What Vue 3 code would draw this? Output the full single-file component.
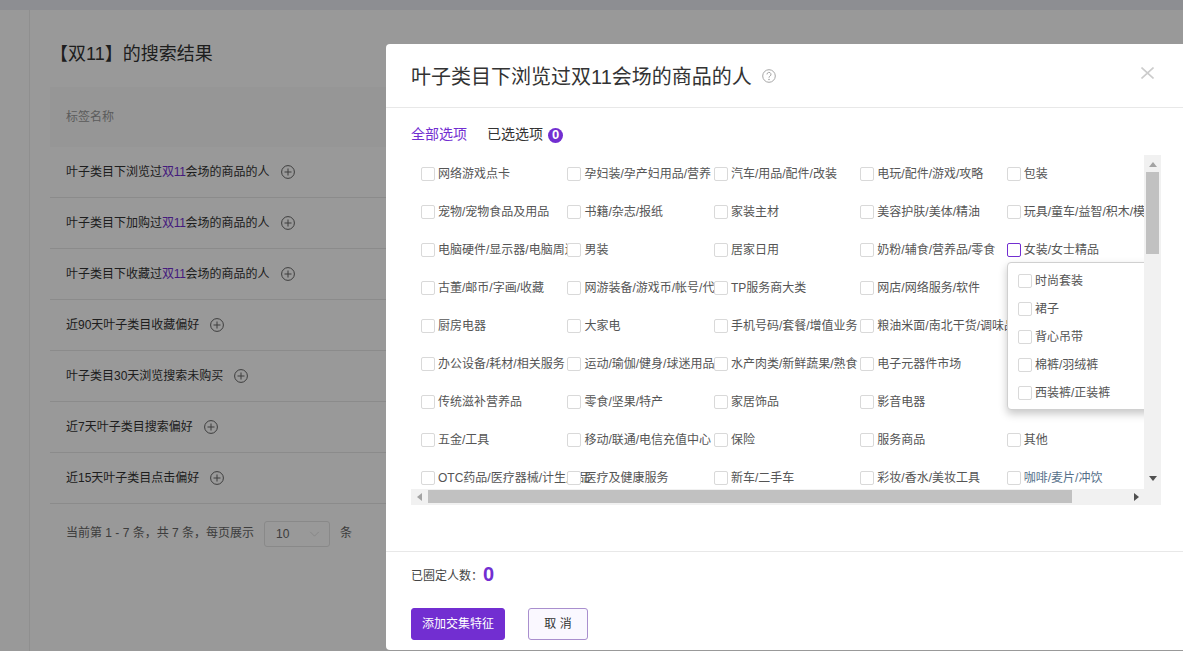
<script setup>
const rows = [
  { pre: '叶子类目下浏览过', hit: '双11', post: '会场的商品的人' },
  { pre: '叶子类目下加购过', hit: '双11', post: '会场的商品的人' },
  { pre: '叶子类目下收藏过', hit: '双11', post: '会场的商品的人' },
  { pre: '近90天叶子类目收藏偏好' },
  { pre: '叶子类目30天浏览搜索未购买' },
  { pre: '近7天叶子类目搜索偏好' },
  { pre: '近15天叶子类目点击偏好' },
]
const options = [
  '网络游戏点卡', '孕妇装/孕产妇用品/营养', '汽车/用品/配件/改装', '电玩/配件/游戏/攻略', '包装',
  '宠物/宠物食品及用品', '书籍/杂志/报纸', '家装主材', '美容护肤/美体/精油', '玩具/童车/益智/积木/模型',
  '电脑硬件/显示器/电脑周边', '男装', '居家日用', '奶粉/辅食/营养品/零食', '女装/女士精品',
  '古董/邮币/字画/收藏', '网游装备/游戏币/帐号/代练', 'TP服务商大类', '网店/网络服务/软件', '',
  '厨房电器', '大家电', '手机号码/套餐/增值业务', '粮油米面/南北干货/调味品', '',
  '办公设备/耗材/相关服务', '运动/瑜伽/健身/球迷用品', '水产肉类/新鲜蔬果/熟食', '电子元器件市场', '',
  '传统滋补营养品', '零食/坚果/特产', '家居饰品', '影音电器', '',
  '五金/工具', '移动/联通/电信充值中心', '保险', '服务商品', '其他',
  'OTC药品/医疗器械/计生用品', '医疗及健康服务', '新车/二手车', '彩妆/香水/美妆工具', '咖啡/麦片/冲饮',
]
const subOptions = ['时尚套装', '裙子', '背心吊带', '棉裤/羽绒裤', '西装裤/正装裤']
</script>

<template>
  <div class="page">
    <div class="topbar"></div>
    <div class="body">
      <aside class="side"></aside>
      <main class="main">
        <h1 class="heading">【双11】的搜索结果</h1>
        <div class="thead">标签名称</div>
        <div v-for="(r, i) in rows" :key="i" class="trow">
          <span>{{ r.pre }}<em v-if="r.hit" class="hit">{{ r.hit }}</em>{{ r.post }}</span>
          <svg class="plus" viewBox="0 0 14 14" width="14" height="14">
            <circle cx="7" cy="7" r="6.4" fill="none" stroke="currentColor" />
            <path d="M7 3.5v7M3.5 7h7" fill="none" stroke="currentColor" />
          </svg>
        </div>
        <div class="pager">
          <span>当前第 1 - 7 条，共 7 条，每页展示</span>
          <div class="select">
            <span>10</span>
            <svg viewBox="0 0 12 7" width="11" height="6"><path d="M1 1l5 5 5-5" fill="none" stroke="currentColor" /></svg>
          </div>
          <span>条</span>
        </div>
      </main>
    </div>

    <div class="mask">
      <section class="modal">
        <header class="m-head">
          <h2 class="m-title">叶子类目下浏览过双11会场的商品的人</h2>
          <svg class="help" viewBox="0 0 14 14" width="14" height="14">
            <circle cx="7" cy="7" r="6.3" fill="none" stroke="currentColor" />
            <path d="M5 5.4a2 2 0 1 1 3 1.7c-.7.4-1 .8-1 1.6" fill="none" stroke="currentColor" />
            <circle cx="7" cy="10.5" r=".8" fill="currentColor" />
          </svg>
          <svg class="close" viewBox="0 0 13 12" width="13" height="12">
            <path d="M.5.5l12 11M12.5.5l-12 11" fill="none" stroke="currentColor" stroke-width="1.6" />
          </svg>
        </header>

        <div class="m-body">
          <nav class="tabs">
            <span class="tab active">全部选项</span>
            <span class="tab">已选选项</span>
            <span class="badge">0</span>
          </nav>

          <div class="frame">
            <div class="viewport">
              <div class="grid">
                <label v-for="(o, i) in options" :key="i" class="cell">
                  <template v-if="o">
                    <i class="box" :class="{ on: o === '女装/女士精品' }"></i>
                    <span class="txt" :class="{ blue: o === '咖啡/麦片/冲饮' }">{{ o }}</span>
                  </template>
                </label>
              </div>
              <div class="pop">
                <label v-for="s in subOptions" :key="s" class="pop-row">
                  <i class="box"></i><span class="txt">{{ s }}</span>
                </label>
              </div>
            </div>
            <div class="vbar">
              <i class="arr up"></i>
              <div class="vtrack"><div class="vthumb"></div></div>
              <i class="arr down"></i>
            </div>
            <div class="hbar">
              <i class="arr left"></i>
              <div class="htrack"><div class="hthumb"></div></div>
              <i class="arr right"></i>
            </div>
            <div class="corner"></div>
          </div>
        </div>

        <footer class="m-foot">
          <div class="count"><span>已圈定人数：</span><strong>0</strong></div>
          <div class="btns">
            <button class="btn primary">添加交集特征</button>
            <button class="btn ghost">取 消</button>
          </div>
        </footer>
      </section>
    </div>
  </div>
</template>

<style>
html, body { margin: 0; padding: 0; overflow: hidden; }
</style>

<style scoped>
* { box-sizing: border-box; }
.page {
  position: relative;
  width: 1183px;
  height: 651px;
  overflow: hidden;
  background: #fff;
  color: #333;
  font: 12px/1.5 "Liberation Sans", "Noto Sans CJK SC", sans-serif;
}
.topbar { height: 10px; background: #ebedf3; }
.body { display: flex; height: 641px; }
.side { width: 30px; flex: none; border-right: 1px solid #eee; }
.main { flex: 1; min-width: 0; padding: 30px 0 0 20px; }
.heading { margin: 0 0 19px; font-size: 18px; font-weight: 400; line-height: 28px; color: #333; }
.thead {
  height: 60px;
  padding-left: 16px;
  line-height: 60px;
  background: #fafafa;
  color: #999;
}
.trow {
  display: flex;
  align-items: center;
  gap: 11px;
  height: 51px;
  padding-left: 16px;
  border-bottom: 1px solid #e8e8e8;
  color: #333;
}
.trow:last-of-type { border-bottom: 0; }
.hit { font-style: normal; color: #722ed1; letter-spacing: -0.3px; }
.plus { color: #666; flex: none; }
.pager {
  display: flex;
  align-items: center;
  margin-top: 17px;
  padding-left: 16px;
  color: #666;
}
.pager > span { padding-bottom: 2px; }
.select {
  display: flex;
  align-items: center;
  justify-content: space-between;
  width: 66px;
  height: 26px;
  margin: 0 10px;
  padding: 0 9px 0 11px;
  border: 1px solid #e4e4e4;
  border-radius: 3px;
  color: #666;
}
.select svg { color: #ddd; }

.mask {
  position: absolute;
  inset: 0;
  background: rgba(0, 0, 0, 0.4);
}
.modal {
  position: absolute;
  left: 386px;
  top: 44px;
  width: 797px;
  height: 606px;
  display: flex;
  flex-direction: column;
  background: #fff;
  border-radius: 4px 0 0 4px;
}
.m-head {
  display: flex;
  align-items: center;
  height: 64px;
  padding: 2px 29px 0 25px;
  border-bottom: 1px solid #e8e8e8;
  flex: none;
}
.m-title { margin: 0; font-size: 20px; font-weight: 400; line-height: 28px; color: #333; }
.help { margin: 0 0 1px 10px; color: #a6a6a6; flex: none; }
.close { margin-left: auto; margin-bottom: 8px; color: #ccc; flex: none; }
.m-body { padding: 16px 22px 0 25px; height: 443px; flex: none; }
.tabs { display: flex; align-items: center; height: 21px; font-size: 14px; }
.tab { color: #333; }
.tab.active { color: #722ed1; margin-right: 20px; }
.badge {
  display: flex;
  align-items: center;
  justify-content: center;
  width: 15px;
  height: 15px;
  margin: 1px 0 0 5px;
  border-radius: 50%;
  background: #722ed1;
  color: #fff;
  font-size: 13px;
  font-weight: 700;
}
.frame {
  display: grid;
  grid-template-columns: 733px 17px;
  grid-template-rows: 334px 16px;
  margin-top: 10px;
}
.viewport { position: relative; overflow: hidden; }
.grid {
  display: grid;
  grid-template-columns: repeat(5, 146.45px);
  grid-auto-rows: 38px;
  padding: 0 0 0 10px;
  margin-top: 12px;
}
.cell {
  display: flex;
  align-items: flex-start;
  position: relative;
  white-space: nowrap;
}
.box {
  display: block;
  width: 14px;
  height: 14px;
  flex: none;
  margin-right: 3px;
  border: 1px solid #d9d9d9;
  border-radius: 2px;
  background: #fff;
  position: relative;
  z-index: 1;
}
.box.on { border-color: #722ed1; }
.txt { color: #555; line-height: 14px; }
.txt.blue { color: #56708a; }
.pop {
  position: absolute;
  left: 596px;
  top: 107px;
  width: 150px;
  height: 148px;
  padding: 4px 10px;
  background: #fff;
  border: 1px solid #d0d0d0;
  border-radius: 4px;
  box-shadow: 0 4px 8px rgba(0, 0, 0, 0.22);
  z-index: 2;
}
.pop-row { display: flex; align-items: center; height: 28px; white-space: nowrap; }

.vbar, .hbar, .corner { background: #f1f1f1; }
.vbar { display: flex; flex-direction: column; align-items: center; }
.vtrack { flex: 1; width: 100%; padding: 0 2px; }
.vthumb { height: 82px; background: #c1c1c1; }
.hbar { display: flex; align-items: center; }
.htrack { flex: 1; height: 100%; padding: 1px 0 2px; }
.hthumb { width: 644px; height: 13px; background: #c1c1c1; }
.arr { display: block; width: 0; height: 0; flex: none; border-style: solid; border-color: transparent; }
.arr.up { margin: 7px 0 5px; border-width: 0 4px 5px; border-bottom-color: #a3a3a3; }
.arr.down { margin: 4px 0 8px; border-width: 5px 4px 0; border-top-color: #505050; }
.arr.left { margin: 0 6px 0 6px; border-width: 4px 5px 4px 0; border-right-color: #a3a3a3; }
.arr.right { margin: 0 5px 0 7px; border-width: 4px 0 4px 5px; border-left-color: #505050; }

.m-foot { flex: 1; border-top: 1px solid #e8e8e8; padding: 0 25px; }
.count { display: flex; align-items: center; height: 45px; padding-top: 1px; color: #444; }
.count span { margin-top: 2px; }
.count strong { font-size: 20px; line-height: 24px; color: #722ed1; margin-top: -3px; }
.btns { display: flex; gap: 23px; margin-top: 11px; }
.btn {
  height: 32px;
  border-radius: 3px;
  font: inherit;
  cursor: pointer;
  padding: 0;
}
.btn.primary { width: 94px; background: #722ed1; border: 1px solid #722ed1; color: #fff; }
.btn.ghost { width: 60px; background: #faf8ff; border: 1px solid #a98fce; color: #333; }
</style>
